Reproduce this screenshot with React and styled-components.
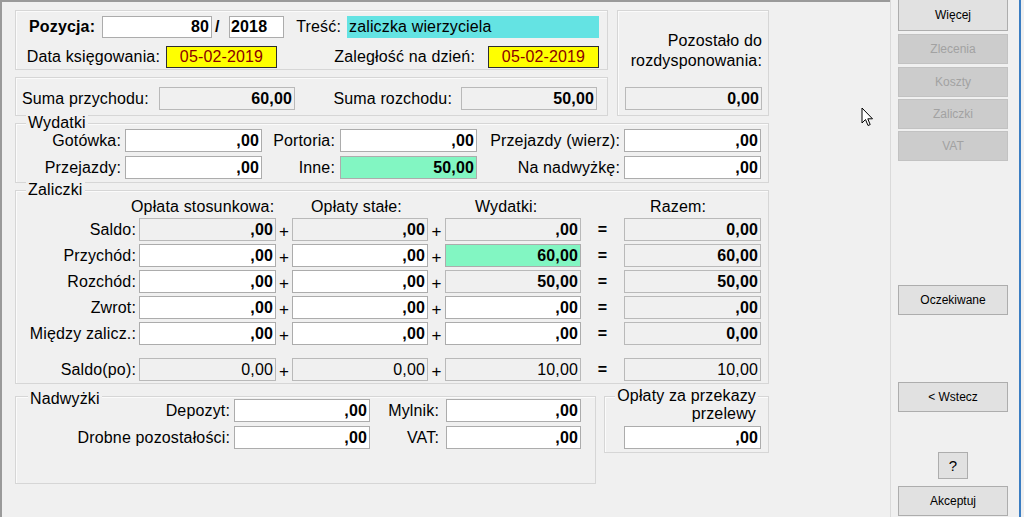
import React from 'react';
import styled, { createGlobalStyle } from 'styled-components';

const Global = createGlobalStyle`
  html, body { margin: 0; padding: 0; background: #f0f0f0; overflow: hidden; }
  body { font-family: "Liberation Sans", Arial, sans-serif; }
  *, *::before, *::after { box-sizing: border-box; }
`;

const Window = styled.div`
  position: relative;
  display: flex;
  width: 1024px;
  height: 517px;
  background: #f0f0f0;
  overflow: hidden;
  color: #000;
`;

const Main = styled.div`
  flex: none;
  width: 890px;
  height: 517px;
  border-top: 2px solid #9a9a9a;
  border-left: 2px solid #9a9a9a;
  padding: 8px 0 0 13px;
  display: flex;
  flex-direction: column;
  font-size: 16px;
  letter-spacing: 0.15px;
`;

const TopRow = styled.div`
  display: flex;
  gap: 9px;
  align-items: flex-start;
`;

const Column = styled.div`
  display: flex;
  flex-direction: column;
  gap: 7px;
`;

const BottomRow = styled.div`
  display: flex;
  gap: 8px;
  align-items: flex-start;
  margin-top: 12px;
`;

const Box = styled.div`
  position: relative;
  flex: none;
  width: ${p => p.$w}px;
  height: ${p => p.$h}px;
  margin-top: ${p => p.$mt || 0}px;
  border: 1px solid #d6d6d6;
  box-shadow: inset 1px 1px 0 #fbfbfb;
  padding: ${p => p.$pad || '0'};
`;

const Title = styled.div`
  position: absolute;
  top: ${p => p.$top ?? -9}px;
  ${p => (p.$right !== undefined ? `right: ${p.$right}px; text-align: right;` : `left: ${p.$left ?? 10}px;`)}
  padding: 0 2px;
  line-height: ${p => p.$lh || 16}px;
  background: #f0f0f0;
  white-space: nowrap;
`;

const Line = styled.div`
  display: grid;
  grid-template-columns: ${p => p.$cols};
  grid-auto-rows: ${p => p.$rh || 23}px;
  row-gap: ${p => p.$rg || 0}px;
  margin-top: ${p => p.$mt || 0}px;
  align-items: stretch;
`;

const Label = styled.div`
  align-self: center;
  text-align: ${p => (p.$left ? 'left' : 'right')};
  padding: 0 ${p => p.$pr ?? 4}px 0 ${p => p.$pl ?? 0}px;
  font-weight: ${p => (p.$bold ? 700 : 400)};
  line-height: 18px;
  white-space: nowrap;
`;

const MultiLabel = styled.div`
  text-align: right;
  line-height: 20px;
`;

const HeadText = styled.div`
  align-self: center;
  margin-left: ${p => p.$ml}px;
  line-height: 18px;
  white-space: nowrap;
`;

const fieldBg = {
  white: '#ffffff',
  gray: '#f0f0f0',
  green: '#82f6c2',
  cyan: '#64e3e3',
  yellow: '#ffff00',
};

const fieldBorder = {
  white: '#acacac',
  gray: '#b9b9b9',
  green: '#acacac',
  cyan: '#64e3e3',
  yellow: '#2e2e2e',
};

const Field = styled.div`
  width: ${p => (p.$w ? `${p.$w}px` : 'auto')};
  height: ${p => p.$h || 23}px;
  margin-top: ${p => p.$mt || 0}px;
  background: ${p => fieldBg[p.$bg || 'white']};
  border: 1px solid ${p => fieldBorder[p.$bg || 'white']};
  color: ${p => (p.$bg === 'yellow' ? '#8a0000' : '#000')};
  font-weight: ${p => (p.$normal ? 400 : 700)};
  text-align: ${p => p.$align || 'right'};
  padding: 0 2px 0 ${p => (p.$align === 'left' ? 1 : 2)}px;
  line-height: ${p => (p.$h || 23) - 2}px;
  white-space: nowrap;
  overflow: hidden;
`;

const Op = styled.div`
  display: flex;
  align-items: center;
  justify-content: center;
  padding-top: ${p => (p.$eq ? 0 : 4)}px;
  font-size: ${p => (p.$eq ? 16 : 17)}px;
  font-weight: ${p => (p.$eq ? 700 : 400)};
`;

const Side = styled.div`
  flex: none;
  width: 134px;
  height: 517px;
  border-left: 1px solid #dadada;
  padding-left: 7px;
  display: flex;
  flex-direction: column;
  align-items: flex-start;
  box-shadow: inset -3px 0 0 #f0f0f0, inset -5px 0 0 #3b7dc2;
  font-family: "Liberation Sans", Arial, sans-serif;
`;

const Btn = styled.div`
  flex: none;
  width: ${p => p.$w || 110}px;
  height: ${p => p.$h || 30}px;
  margin-top: ${p => p.$mt || 0}px;
  margin-left: ${p => p.$ml || 0}px;
  border: 1px solid ${p => (p.$disabled ? '#c2c2c2' : '#adadad')};
  background: ${p => (p.$disabled ? '#cccccc' : '#e1e1e1')};
  color: ${p => (p.$disabled ? '#a2a2a2' : '#000')};
  font-size: ${p => p.$fs || 12}px;
  display: flex;
  align-items: center;
  justify-content: center;
  white-space: nowrap;
`;

const Cursor = styled.svg`
  position: absolute;
  left: 861px;
  top: 107px;
`;

const Z_COLS = '123px 137px 16px 136px 17px 136px 43px 137px';
const W_COLS = '109px 137px 78px 137px 147px 137px';

const zRows = [
  { label: 'Saldo:', mt: 2, c: [['gray', ',00'], ['gray', ',00'], ['gray', ',00'], ['gray', '0,00']] },
  { label: 'Przychód:', mt: 3, c: [['white', ',00'], ['white', ',00'], ['green', '60,00'], ['gray', '60,00']] },
  { label: 'Rozchód:', mt: 3, c: [['white', ',00'], ['white', ',00'], ['gray', '50,00'], ['gray', '50,00']] },
  { label: 'Zwrot:', mt: 3, c: [['white', ',00'], ['white', ',00'], ['white', ',00'], ['gray', ',00']] },
  { label: 'Między zalicz.:', mt: 3, c: [['white', ',00'], ['white', ',00'], ['white', ',00'], ['gray', '0,00']] },
  { label: 'Saldo(po):', mt: 13, normal: true, c: [['gray', '0,00'], ['gray', '0,00'], ['gray', '10,00'], ['gray', '10,00']] },
];

function ZRow({ row }) {
  const [a, b, c, d] = row.c;
  return (
    <Line $cols={Z_COLS} $mt={row.mt}>
      <Label $pr={3}>{row.label}</Label>
      <Field $bg={a[0]} $normal={row.normal}>{a[1]}</Field>
      <Op>+</Op>
      <Field $bg={b[0]} $normal={row.normal}>{b[1]}</Field>
      <Op>+</Op>
      <Field $bg={c[0]} $normal={row.normal}>{c[1]}</Field>
      <Op $eq>=</Op>
      <Field $bg={d[0]} $normal={row.normal}>{d[1]}</Field>
    </Line>
  );
}

export default function App() {
  return (
    <Window>
      <Global />
      <Main>
        <TopRow>
          <Column>
            <Box $w={593} $h={60} $pad="5px 0 1px 0">
              <Line $cols="86px 110px 17px 55px 63px 252px" $rh={22}>
                <Label $left $pl={13} $pr={0} $bold>Pozycja:</Label>
                <Field $h={22}>80</Field>
                <Label $left $pl={3} $pr={0} $bold>/</Label>
                <Field $h={22} $align="left">2018</Field>
                <Label $pr={6}>Treść:</Label>
                <Field $h={22} $bg="cyan" $align="left" $normal>zaliczka wierzyciela</Field>
              </Line>
              <Line $cols="150px 111px 211px 111px" $rh={22} $mt={8}>
                <Label $pr={6}>Data księgowania:</Label>
                <Field $h={22} $bg="yellow" $align="center" $normal>05-02-2019</Field>
                <Label $pr={13}>Zaległość na dzień:</Label>
                <Field $h={22} $bg="yellow" $align="center" $normal>05-02-2019</Field>
              </Line>
            </Box>
            <Box $w={593} $h={39} $pad="9px 0 0 0">
              <Line $cols="143px 136px 166px 136px">
                <Label $left $pl={6}>Suma przychodu:</Label>
                <Field $bg="gray">60,00</Field>
                <Label $pr={9}>Suma rozchodu:</Label>
                <Field $bg="gray">50,00</Field>
              </Line>
            </Box>
          </Column>
          <Box $w={152} $h={106} $pad="20px 6px 0 7px">
            <MultiLabel>
              Pozostało do
              <br />
              rozdysponowania:
            </MultiLabel>
            <Field $w={137} $mt={16} $bg="gray">0,00</Field>
          </Box>
        </TopRow>

        <Box $w={754} $h={60} $mt={7} $pad="5px 0 0 0">
          <Title>Wydatki</Title>
          <Line $cols={W_COLS} $rg={4}>
            <Label>Gotówka:</Label>
            <Field>,00</Field>
            <Label $pr={5}>Portoria:</Label>
            <Field>,00</Field>
            <Label>Przejazdy (wierz):</Label>
            <Field>,00</Field>
            <Label>Przejazdy:</Label>
            <Field>,00</Field>
            <Label $pr={5}>Inne:</Label>
            <Field $bg="green">50,00</Field>
            <Label>Na nadwyżkę:</Label>
            <Field>,00</Field>
          </Line>
        </Box>

        <Box $w={754} $h={194} $mt={7} $pad="7px 0 0 0">
          <Title>Zaliczki</Title>
          <Line $cols={Z_COLS} $rh={18}>
            <span />
            <HeadText $ml={-8}>Opłata stosunkowa:</HeadText>
            <span />
            <HeadText $ml={19}>Opłaty stałe:</HeadText>
            <span />
            <HeadText $ml={30}>Wydatki:</HeadText>
            <span />
            <HeadText $ml={26}>Razem:</HeadText>
          </Line>
          {zRows.map(r => (
            <ZRow key={r.label} row={r} />
          ))}
        </Box>

        <BottomRow>
          <Box $w={581} $h={88} $pad="2px 0 0 0">
            <Title $left={12} $top={-6}>Nadwyżki</Title>
            <Line $cols="218px 136px 76px 135px" $rg={4}>
              <Label>Depozyt:</Label>
              <Field>,00</Field>
              <Label $pr={7}>Mylnik:</Label>
              <Field>,00</Field>
              <Label>Drobne pozostałości:</Label>
              <Field>,00</Field>
              <Label $pr={7}>VAT:</Label>
              <Field>,00</Field>
            </Line>
          </Box>
          <Box $w={165} $h={57} $pad="29px 0 0 19px">
            <Title $right={10} $top={-10} $lh={18}>
              Opłaty za przekazy
              <br />
              przelewy
            </Title>
            <Field $w={137}>,00</Field>
          </Box>
        </BottomRow>
      </Main>

      <Side>
        <Btn $mt={-1} $h={32}>Więcej</Btn>
        <Btn $mt={3} $disabled>Zlecenia</Btn>
        <Btn $mt={3} $disabled>Koszty</Btn>
        <Btn $mt={2} $disabled>Zaliczki</Btn>
        <Btn $mt={2} $disabled>VAT</Btn>
        <Btn $mt={124}>Oczekiwane</Btn>
        <Btn $mt={67}>&lt; Wstecz</Btn>
        <Btn $mt={40} $ml={40} $w={30} $h={27} $fs={15}>?</Btn>
        <Btn $mt={7}>Akceptuj</Btn>
      </Side>

      <Cursor width="13" height="20" viewBox="0 0 13 20">
        <path d="M1 1 L1 16 L4.5 12.5 L7 18.5 L9.2 17.6 L6.8 11.8 L11.5 11.8 Z" fill="#fff" stroke="#000" strokeWidth="1" strokeLinejoin="miter" />
      </Cursor>
    </Window>
  );
}
